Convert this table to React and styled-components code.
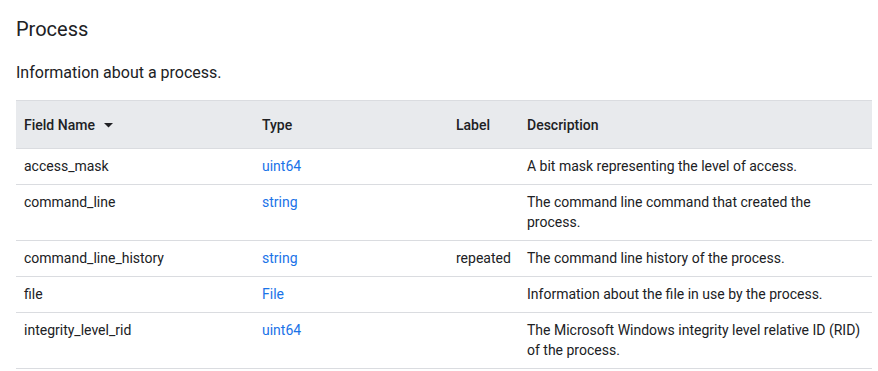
import React from "react";
import styled, { createGlobalStyle } from "styled-components";

const Global = createGlobalStyle`
  html, body { margin: 0; padding: 0; background: #fff; }
  body { font-family: Roboto, "Noto Sans", Arial, sans-serif; color: #202124; -webkit-font-smoothing: antialiased; }
`;

const Page = styled.div`
  padding: 15px 6px 0 16px;
`;

const Title = styled.h2`
  margin: 0;
  font-size: 20px;
  line-height: 28px;
  font-weight: 400;
  color: #202124;
`;

const Intro = styled.p`
  margin: 18px 0 0;
  font-size: 16px;
  line-height: 24px;
  color: #202124;
`;

const Table = styled.table`
  margin-top: 15px;
  width: 856px;
  border-collapse: collapse;
  table-layout: fixed;
  font-size: 14px;
  line-height: 20px;
`;

const Th = styled.th`
  background: #e8eaed;
  text-align: left;
  font-weight: 500;
  padding: 14px 8px 13px;
  height: 20px;
  color: #202124;
  border-top: 1px solid #dadce0;
  border-bottom: 1px solid #dadce0;
  vertical-align: middle;
`;

const Td = styled.td`
  padding: 7px 8px 8px;
  vertical-align: top;
  border-bottom: 1px solid #dadce0;
  color: #202124;
`;

const TypeLink = styled.a`
  color: #1a73e8;
  text-decoration: none;
`;

const Sort = styled.svg`
  width: 9px;
  height: 5px;
  margin-left: 9px;
  vertical-align: middle;
  position: relative;
  top: -1px;
`;

const rows = [
  ["access_mask", "uint64", "", "A bit mask representing the level of access."],
  ["command_line", "string", "", "The command line command that created the process."],
  ["command_line_history", "string", "repeated", "The command line history of the process."],
  ["file", "File", "", "Information about the file in use by the process."],
  ["integrity_level_rid", "uint64", "", "The Microsoft Windows integrity level relative ID (RID) of the process."],
];

export default function App() {
  return (
    <Page>
      <Global />
      <Title>Process</Title>
      <Intro>Information about a process.</Intro>
      <Table>
        <colgroup>
          <col style={{ width: 238 }} />
          <col style={{ width: 194 }} />
          <col style={{ width: 71 }} />
          <col />
        </colgroup>
        <thead>
          <tr>
            <Th>
              Field Name
              <Sort viewBox="0 0 9 5"><path d="M0 0h9L4.5 4.5z" fill="#202124" /></Sort>
            </Th>
            <Th>Type</Th>
            <Th>Label</Th>
            <Th>Description</Th>
          </tr>
        </thead>
        <tbody>
          {rows.map((r) => (
            <tr key={r[0]}>
              <Td>{r[0]}</Td>
              <Td><TypeLink href="#">{r[1]}</TypeLink></Td>
              <Td>{r[2]}</Td>
              <Td>{r[3]}</Td>
            </tr>
          ))}
        </tbody>
      </Table>
    </Page>
  );
}
